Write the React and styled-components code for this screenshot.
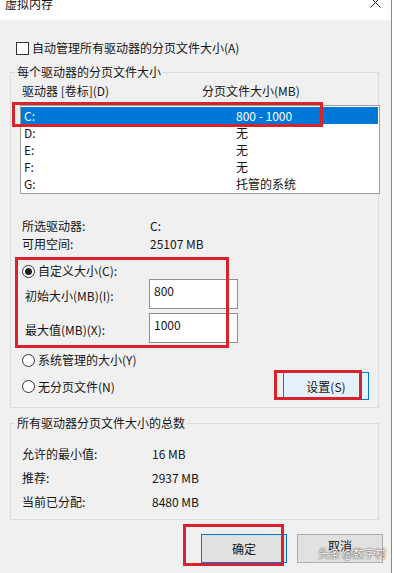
import React from 'react';
import styled, { createGlobalStyle } from 'styled-components';

const GlobalStyle = createGlobalStyle`
  html, body {
    margin: 0;
    padding: 0;
    background: #fff;
  }
  body {
    font-family: "Noto Sans CJK SC", "Liberation Sans", sans-serif;
    font-size: 12px;
    color: #151515;
  }
  * {
    box-sizing: border-box;
  }
`;

const Window = styled.div`
  position: relative;
  width: 392px;
  height: 573px;
  border-right: 1px solid #8a8a8a;
  display: flex;
  flex-direction: column;
  overflow: hidden;
`;

const TitleBar = styled.div`
  flex: none;
  height: 20px;
  background: #fff;
  display: flex;
  justify-content: space-between;
  align-items: flex-start;
  padding: 0 10px 0 5px;
`;

const Title = styled.div`
  margin-top: -4px;
  line-height: 16px;
`;

const CloseIcon = styled.svg`
  margin-top: -3px;
`;

const Client = styled.div`
  flex: 1;
  background: #f0f0f0;
  padding: 20px 8px 0 10px;
  display: flex;
  flex-direction: column;
`;

const CheckRow = styled.div`
  display: flex;
  align-items: center;
  gap: 3px;
  height: 16px;
  margin-left: 6px;
  line-height: 16px;
`;

const CheckBox = styled.span`
  width: 13px;
  height: 13px;
  border: 1px solid #333;
  background: #fff;
`;

const Group = styled.fieldset`
  width: 369px;
  margin: ${p => p.$top}px 0 0 0;
  padding: 0 0 ${p => p.$bottom}px 0;
  border: 1px solid #dcdcdc;
  min-width: 0;
`;

const Legend = styled.legend`
  margin-left: 4px;
  padding: 0 2px;
  line-height: 16px;
`;

const HeaderRow = styled.div`
  display: flex;
  margin-top: 3px;
  padding-left: 11px;
  line-height: 16px;
`;

const HeaderCell = styled.div`
  width: ${p => p.$w ? `${p.$w}px` : 'auto'};
`;

const ListBox = styled.div`
  width: 360px;
  margin: 6px 0 0 9px;
  padding: 1px 0;
  border: 1px solid #a0a0a0;
  background: #fff;
`;

const ListRow = styled.div`
  position: relative;
  display: flex;
  height: 17px;
  line-height: 17px;
  margin-right: 1px;
  padding-left: 3px;
  background: ${p => p.$selected ? '#0078d7' : 'transparent'};
  color: ${p => p.$selected ? '#fff' : '#151515'};
`;

const DriveCell = styled.div`
  width: 212px;
`;

const Mark = styled.div`
  position: absolute;
  left: ${p => p.$l}px;
  top: ${p => p.$t}px;
  width: ${p => p.$w}px;
  height: ${p => p.$h}px;
  border: 3px solid #d8222d;
  pointer-events: none;
`;

const InfoList = styled.div`
  margin-top: ${p => p.$top}px;
  padding-left: 11px;
`;

const InfoRow = styled.div`
  display: flex;
  height: ${p => p.$h}px;
  align-items: center;
`;

const InfoLabel = styled.div`
  width: ${p => p.$w}px;
`;

const CustomBlock = styled.div`
  position: relative;
  margin-top: 11px;
`;

const RadioRow = styled.div`
  display: flex;
  align-items: center;
  gap: 3px;
  height: 16px;
  margin: ${p => p.$top || 0}px 0 0 11px;
  line-height: 16px;
`;

const Radio = styled.span`
  position: relative;
  width: 13px;
  height: 13px;
  border: 1px solid #333;
  border-radius: 50%;
  background: #fff;
  &::after {
    content: '';
    display: ${p => p.$checked ? 'block' : 'none'};
    position: absolute;
    left: 2px;
    top: 2px;
    width: 7px;
    height: 7px;
    border-radius: 50%;
    background: #222;
  }
`;

const FieldRow = styled.div`
  display: flex;
  align-items: center;
  height: 30px;
  margin-top: ${p => p.$top}px;
  padding-left: 14px;
`;

const FieldLabel = styled.div`
  width: 124px;
  padding-top: 3px;
`;

const Field = styled.div`
  width: 89px;
  height: 30px;
  border: 1px solid #8f8f8f;
  background: #fff;
  padding: 3px 4px;
  line-height: 16px;
`;

const BottomRow = styled.div`
  display: flex;
  align-items: center;
  justify-content: space-between;
  height: 28px;
  margin-top: 4px;
  padding: 0 9px 0 11px;
`;

const InlineRadio = styled.div`
  display: flex;
  align-items: center;
  gap: 3px;
`;

const Button = styled.div`
  position: relative;
  width: 86px;
  height: ${p => p.$h || 28}px;
  display: flex;
  align-items: center;
  justify-content: center;
  padding-bottom: ${p => p.$lift || 0}px;
  background: ${p => p.$hover ? '#e5f1fb' : '#e1e1e1'};
  border: 1px solid ${p => p.$primary ? '#0078d7' : '#adadad'};
`;

const ButtonBar = styled.div`
  display: flex;
  justify-content: flex-end;
  gap: 10px;
  margin-top: 14px;
`;

const Watermark = styled.div`
  position: absolute;
  right: 5px;
  bottom: 12px;
  font-size: 11px;
  line-height: 16px;
  color: #fafafa;
  text-shadow: 0 0 1px #444, 0 0 2px #555;
`;

const drives = [
  { name: 'C:', size: '800 - 1000', selected: true },
  { name: 'D:', size: '无' },
  { name: 'E:', size: '无' },
  { name: 'F:', size: '无' },
  { name: 'G:', size: '托管的系统' },
];

const totals = [
  ['允许的最小值:', '16 MB'],
  ['推荐:', '2937 MB'],
  ['当前已分配:', '8480 MB'],
];

const App = () => {
  return (
    <Window>
      <GlobalStyle />
      <TitleBar>
        <Title>虚拟内存</Title>
        <CloseIcon width="11" height="11" viewBox="0 0 11 11">
          <path d="M0.5 0.5 L10.5 10.5 M10.5 0.5 L0.5 10.5" stroke="#222" strokeWidth="1" fill="none" />
        </CloseIcon>
      </TitleBar>
      <Client>
        <CheckRow>
          <CheckBox />
          <span>自动管理所有驱动器的分页文件大小(A)</span>
        </CheckRow>

        <Group $top={8} $bottom={7}>
          <Legend>每个驱动器的分页文件大小</Legend>
          <HeaderRow>
            <HeaderCell $w={180}>驱动器 [卷标](D)</HeaderCell>
            <HeaderCell>分页文件大小(MB)</HeaderCell>
          </HeaderRow>
          <ListBox>
            {drives.map(d => (
              <ListRow key={d.name} $selected={d.selected}>
                <DriveCell>{d.name}</DriveCell>
                <div>{d.size}</div>
                {d.selected && <Mark $l={-9} $t={-5} $w={311} $h={25} />}
              </ListRow>
            ))}
          </ListBox>

          <InfoList $top={22}>
            <InfoRow $h={18}>
              <InfoLabel $w={128}>所选驱动器:</InfoLabel>
              <div>C:</div>
            </InfoRow>
            <InfoRow $h={18}>
              <InfoLabel $w={128}>可用空间:</InfoLabel>
              <div>25107 MB</div>
            </InfoRow>
          </InfoList>

          <CustomBlock>
            <RadioRow>
              <Radio $checked />
              <span>自定义大小(C):</span>
            </RadioRow>
            <FieldRow $top={0}>
              <FieldLabel>初始大小(MB)(I):</FieldLabel>
              <Field>800</Field>
            </FieldRow>
            <FieldRow $top={4}>
              <FieldLabel>最大值(MB)(X):</FieldLabel>
              <Field>1000</Field>
            </FieldRow>
            <Mark $l={4} $t={-6} $w={214} $h={91} />
          </CustomBlock>

          <RadioRow $top={9}>
            <Radio />
            <span>系统管理的大小(Y)</span>
          </RadioRow>
          <BottomRow>
            <InlineRadio>
              <Radio />
              <span>无分页文件(N)</span>
            </InlineRadio>
            <Button $primary $hover>
              设置(S)
              <Mark $l={-10} $t={-3} $w={88} $h={30} />
            </Button>
          </BottomRow>
        </Group>

        <Group $top={7} $bottom={6}>
          <Legend>所有驱动器分页文件大小的总数</Legend>
          <InfoList $top={10}>
            {totals.map(([label, value]) => (
              <InfoRow key={label} $h={24}>
                <InfoLabel $w={130}>{label}</InfoLabel>
                <div>{value}</div>
              </InfoRow>
            ))}
          </InfoList>
        </Group>

        <ButtonBar>
          <Button $primary $h={29}>
            确定
            <Mark $l={-19} $t={-11} $w={101} $h={42} />
          </Button>
          <Button $h={29} $lift={6}>取消</Button>
        </ButtonBar>
      </Client>
      <Watermark>头条 @数字村</Watermark>
    </Window>
  );
};

export default App;
